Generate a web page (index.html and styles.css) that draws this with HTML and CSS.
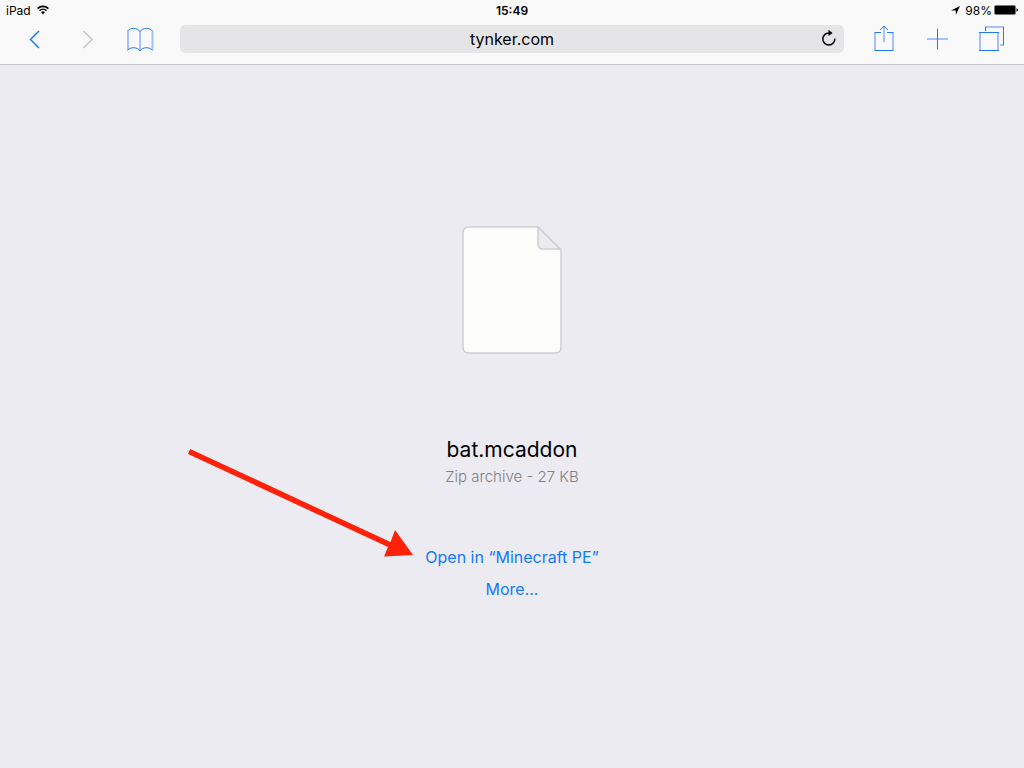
FILE: index.html
```html
<!DOCTYPE html>
<html lang="en">
<head>
  <meta charset="UTF-8">
  <meta name="viewport" content="width=device-width, initial-scale=1.0">
  <title>tynker.com</title>
  <link rel="stylesheet" href="styles.css">
</head>
<body>
  <header>
    <div class="status">
      <div class="status-left">
        <span>iPad</span>
        <svg width="12" height="10" viewBox="0 0 12 10" fill="none" stroke="#000" stroke-width="1.6">
          <path d="M0.6 3.6A7.6 7.6 0 0 1 11.4 3.6M2.5 5.7A5 5 0 0 1 9.5 5.7"/>
          <path d="M6 9.2L4.1 7.3A2.7 2.7 0 0 1 7.9 7.3Z" fill="#000" stroke="none"/>
        </svg>
      </div>
      <span class="time">15:49</span>
      <div class="status-right">
        <svg width="9" height="9" viewBox="0 0 9 9"><path d="M9 0L4.8 9V4.6H0Z"/></svg>
        <span class="percent">98%</span>
        <svg width="24" height="10" viewBox="0 0 24 10">
          <rect x="0.5" y="0.5" width="21" height="9" rx="1.5" fill="#000" stroke="#77777a"/>
          <path d="M22.5 3.3Q24 3.7 24 5T22.5 6.7Z"/>
        </svg>
      </div>
    </div>

    <nav class="toolbar">
      <button class="tool" aria-label="Back">
        <svg viewBox="0 0 53 28"><path d="M31 6L22.5 14.5L31 23" stroke-width="1.5"/></svg>
      </button>
      <button class="tool" aria-label="Forward" disabled>
        <svg viewBox="0 0 53 28"><path d="M22.5 6L31 14.5L22.5 23" stroke-width="1.5"/></svg>
      </button>
      <button class="tool" aria-label="Bookmarks">
        <svg viewBox="0 0 53 28">
          <path class="soft" d="M14 6V25M26 6V25M38.5 6V25"/>
          <path d="M13.5 6C16 2.5 23.5 2.5 26 6.5C28.5 2.5 36 2.5 38.5 6M13.5 25.5C16 21.5 24 22 26 26C28 22 36 21.5 38.5 25.5"/>
        </svg>
      </button>

      <div class="address">
        <input type="text" value="tynker.com" aria-label="Address">
        <button class="reload" aria-label="Reload">
          <svg width="16" height="18" viewBox="0 0 16 18" fill="none" stroke="#000" stroke-width="1.5">
            <path d="M13.8 9.5A6 6 0 1 1 8.5 4"/>
            <path d="M7.5 0.8L11.6 4L7.5 7Z" fill="#000" stroke="none"/>
          </svg>
        </button>
      </div>

      <button class="tool" aria-label="Share">
        <svg viewBox="0 0 53 28">
          <path class="soft" d="M18 8V25M36 8V25M27 2V17"/>
          <path d="M24 7.5H17.5M30 7.5H36.5M17.5 25.5H36.5M23 5L27 1L31 5"/>
        </svg>
      </button>
      <button class="tool" aria-label="New tab">
        <svg viewBox="0 0 53 28">
          <path class="soft" d="M17 14H38"/>
          <path d="M27.5 3.5V24.5"/>
        </svg>
      </button>
      <button class="tool" aria-label="Tabs">
        <svg viewBox="0 0 53 28">
          <path class="soft" d="M17 8V25M35 8V25M22 2H41M37 20H41"/>
          <path d="M16 7.5H36M16 25.5H36M22.5 2V6M40.5 2V20"/>
        </svg>
      </button>
    </nav>
  </header>

  <main>
    <svg class="file-icon" width="100" height="129" viewBox="0 0 100 129" stroke="#cfcfd4" stroke-width="1.5">
      <path d="M7 1H76L99 24V121Q99 127 93 127H7Q1 127 1 121V7Q1 1 7 1Z" fill="#fcfcfa"/>
      <path d="M76 1V18Q76 23 81 23H98Z" fill="#ececee"/>
    </svg>
    <h1>bat.mcaddon</h1>
    <p class="info">Zip archive - 27 KB</p>

    <div class="actions">
      <svg class="arrow" width="226" height="110" viewBox="0 0 226 110" fill="#ff2108">
        <path d="M2.2 0L0 5L200 98L196 107.5L225 106L207 81L202.5 93Z"/>
      </svg>
      <a href="#">Open in “Minecraft PE”</a>
      <a href="#">More...</a>
    </div>
  </main>
</body>
</html>
```
FILE: styles.css
```css
* { box-sizing: border-box; }
body {
  margin: 0;
  min-height: 100vh;
  background: #ebebf1;
  font-family: Inter, "Liberation Sans", sans-serif;
  color: #000;
}
header {
  background: #f9f9f9;
  border-bottom: 1px solid #c8c8cc;
}
button {
  border: 0;
  padding: 0;
  background: none;
}

.status {
  display: grid;
  grid-template-columns: 1fr auto 1fr;
  align-items: center;
  height: 20px;
  padding: 0 6px;
  font-size: 12px;
}
.status-left, .status-right {
  display: flex;
  align-items: center;
  gap: 6px;
}
.status-right { justify-content: flex-end; gap: 2px; }
.percent { margin-left: 3px; }
.time { font-weight: 600; }

.toolbar {
  display: flex;
  padding: 5px 8px 11px;
}
.tool { width: 53px; height: 28px; }
.tool svg {
  display: block;
  width: 53px;
  height: 28px;
  fill: none;
  stroke: #2179f5;
}
.tool:disabled svg { stroke: #c5c5ca; }
.tool .soft { stroke: #a6c0fd; stroke-width: 2; }

.address {
  position: relative;
  flex: 1;
  margin: 0 13px;
}
.address input {
  display: block;
  width: 100%;
  height: 28px;
  border: 0;
  border-radius: 5px;
  padding: 0 32px;
  background: #e5e5e7;
  font: 16px Inter, "Liberation Sans", sans-serif;
  text-align: center;
}
.reload {
  position: absolute;
  top: 4px;
  right: 7px;
  height: 18px;
}
.reload svg { display: block; }

main {
  display: flex;
  flex-direction: column;
  align-items: center;
  padding: 161px 16px 32px;
}
h1 {
  margin: 81px 0 0;
  font-size: 21px;
  line-height: 28px;
  font-weight: 400;
}
.info {
  margin: 3px 0 0;
  font-size: 15px;
  line-height: 20px;
  font-weight: 300;
  color: #808085;
}
.actions {
  position: relative;
  display: flex;
  flex-direction: column;
  align-items: center;
  margin-top: 54px;
}
.actions a {
  font-size: 16px;
  line-height: 32px;
  color: #1479fb;
  text-decoration: none;
}
.arrow {
  position: absolute;
  top: -92px;
  right: calc(100% + 11px);
}
```
